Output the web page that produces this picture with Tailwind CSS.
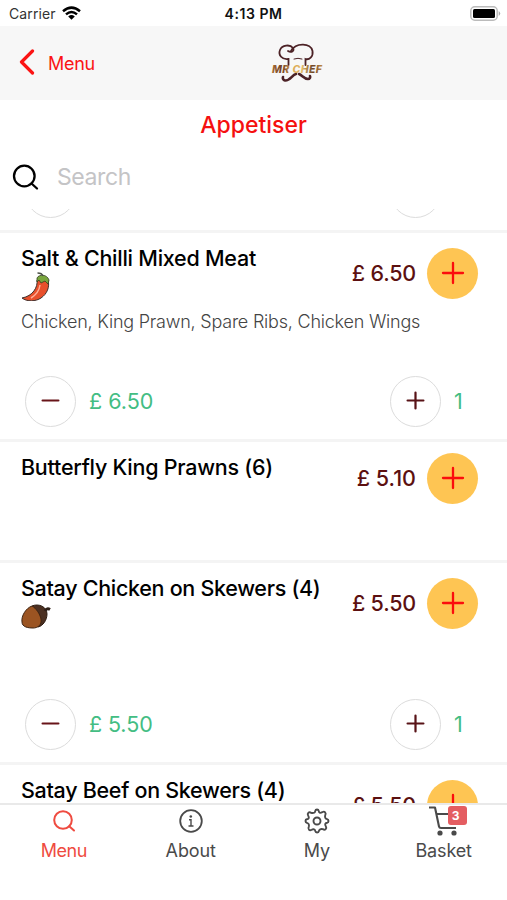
<!DOCTYPE html>
<html lang="en">
<head>
<meta charset="utf-8">
<title>Appetiser</title>
<script src="https://cdn.jsdelivr.net/npm/@tailwindcss/browser@4"></script>
</head>
<body class="bg-white">
<svg class="hidden">
  <symbol id="plus" viewBox="0 0 24 24"><path d="M12 2v20M2 12h20" stroke="currentColor" stroke-linecap="round" fill="none"/></symbol>
  <symbol id="minus" viewBox="0 0 24 24"><path d="M2 12h20" stroke="currentColor" stroke-linecap="round" fill="none"/></symbol>
</svg>
<div class="w-[507px] h-[900px] overflow-hidden flex flex-col bg-white font-['Inter','Liberation_Sans',sans-serif] whitespace-nowrap">
  <div class="h-[26px] shrink-0 grid grid-cols-3 items-center text-[14px] leading-5 text-[#111] pt-[2px]">
    <div class="flex items-center pl-[9px] gap-[6px]">
      <span class="tracking-[0.1px] text-[#333]">Carrier</span>
      <svg class="w-[19px] h-[14px] -mt-[3px]" viewBox="0 0 19 14" fill="none" stroke="#000" stroke-width="2.5"><path d="M1 5.2Q9.5-2 18 5.2M4 8.4Q9.5 3.6 15 8.4"/><path d="M6.2 10.4Q9.5 7.8 12.8 10.4L9.5 13.8Z" fill="#000" stroke="none"/></svg>
    </div>
    <span class="text-center font-semibold tracking-[0.55px]">4:13 PM</span>
    <svg class="justify-self-end mr-[6px] w-[31px] h-[15px] -mt-[2px]" viewBox="0 0 31 15"><rect x=".8" y=".8" width="26.4" height="13.4" rx="4" fill="#fff" stroke="#bbb" stroke-width="1.5"/><rect x="3" y="3" width="22" height="9" rx="1.5"/><path d="M28.7 5q3 2.5 0 5z" fill="#aaa"/></svg>
  </div>
  <div class="h-[74px] shrink-0 bg-[#f7f7f7] flex items-center pl-[19px]">
    <div class="flex items-center text-[#fb1414] w-[252px]">
      <svg class="w-[16px] h-[26px] -mt-[3px]" viewBox="0 0 16 26" fill="none" stroke="currentColor" stroke-width="3.2" stroke-linecap="round" stroke-linejoin="round"><path d="M13.5 2 2.5 13 13.5 24"/></svg>
      <span class="ml-[13px] mt-[2px] text-[18px] leading-6 tracking-[-0.3px]">Menu</span>
    </div>
    <svg class="w-[52px] h-[40px]" viewBox="0 0 52 40" fill="none" stroke="#4c2226" stroke-linecap="round">
      <path stroke-width="1.8" d="M17.5 22V16C11 17 7 12 9 7 11 2 19 1 22 5 24 8 20 10 17 8"/>
      <path stroke-width="1.8" d="M20 8C25-1 40 0 41.5 8 42.5 14 38 17 34.5 16V22"/>
      <path stroke-width="1" d="M23 16q4-1.500 8 0"/>
      <path stroke-width="2.6" d="M25 31C21 32 19 38 14 37.5 12 37 11.5 35 12 34"/>
      <path stroke-width="2.6" d="M28 31C31 32 33 36 37 36 39 36 39.5 34 39 33"/>
      <defs><linearGradient id="gold" x1="0" x2="1"><stop stop-color="#a66c35"/><stop offset=".2" stop-color="#6e3c24"/><stop offset=".4" stop-color="#dba956"/><stop offset=".6" stop-color="#e2b867"/><stop offset=".8" stop-color="#6e4426"/><stop offset="1" stop-color="#c59049"/></linearGradient></defs>
      <text x="1" y="29.5" textLength="50" lengthAdjust="spacing" font-family="Inter" font-weight="800" font-style="italic" font-size="10.5" fill="url(#gold)" stroke="none">MR CHEF</text>
    </svg>
  </div>
  <div class="h-[50px] shrink-0 flex items-center justify-center text-[23px] font-medium text-[#f51010]"><span>Appetiser</span></div>
  <div class="h-[59px] shrink-0 flex items-start pt-[14px] pl-[12px]">
    <svg class="w-[28px] h-[28px]" viewBox="0 0 28 28" fill="none" stroke="#000" stroke-width="2.3" stroke-linecap="round"><circle cx="12.3" cy="12" r="10.3"/><path d="m19.5 19.5 5.5 5"/></svg>
    <span class="ml-[17px] mt-[-1px] text-[23px] leading-[28px] text-[#c4c4c6] tracking-[-0.4px]">Search</span>
  </div>
  <div class="h-[594px] shrink-0 overflow-hidden flex flex-col">
    <div class="h-[24px] shrink-0 border-b-3 border-[#f4f4f4] pl-[25px] pr-[66px] flex items-end justify-between pb-[12px]">
      <div class="size-[51px] shrink-0 rounded-full border-[1.5px] border-[#dcdcdc]"></div>
      <div class="size-[51px] shrink-0 rounded-full border-[1.5px] border-[#dcdcdc]"></div>
    </div>

    <div class="h-[209px] shrink-0 border-b-3 border-[#f4f4f4] flex flex-col justify-between pb-[12px]">
      <div class="flex justify-between pl-[21px] pr-[29px]">
        <div class="pt-[11px] w-[320px]">
          <div class="text-[21.5px] leading-[28px] font-medium text-black tracking-[-0.25px]"><span>Salt &amp; Chilli Mixed Meat</span></div>
          <svg class="w-[30px] h-[29px]" viewBox="0 0 30 29"><path d="M16 8C17 15 12 24 1 26 6 30 15 29.5 20 26 26 22 29 15 27 8 24 5 19 5 16 8Z" fill="#e8502c" stroke="#3d302d"/><path d="M16 6C18 2 26 2 28 8L27 12 24 9 20 11 18 8 16 10Z" fill="#79a63d" stroke="#34401f" stroke-width=".8"/><path d="M22 4Q21 1 16.5 1" fill="none" stroke="#4d5148" stroke-width="1.3"/><path d="M19 13Q18 21 10 26" fill="none" stroke="#ffad96" stroke-width="1.5"/></svg>
          <div class="mt-[9px] text-[18px] leading-[24px] font-light text-[#444] tracking-[-0.22px]"><span>Chicken, King Prawn, Spare Ribs, Chicken Wings</span></div>
        </div>
        <div class="flex items-center h-[51px] mt-[15px]">
          <span class="text-[21.5px] font-medium text-[#5c1010] mr-[11px] tracking-[-0.2px]">£ 6.50</span>
          <div class="size-[51px] rounded-full bg-[#fec553] flex items-center justify-center text-[#fb0d0d]"><svg class="size-[24px] stroke-[2.3] -mt-[2px]"><use href="#plus"/></svg></div>
        </div>
      </div>
      <div class="flex justify-between pl-[25px] -mt-[16px] text-[21.5px] text-[#43bd83]">
        <div class="flex items-center"><div class="size-[51px] rounded-full border-[1.5px] border-[#dcdcdc] flex items-center justify-center text-[#681419]"><svg class="size-[19px] stroke-[2.8] -mt-[2px]"><use href="#minus"/></svg></div><span class="ml-[13px]">£ 6.50</span></div>
        <div class="flex items-center w-[117px]"><div class="size-[51px] rounded-full border-[1.5px] border-[#dcdcdc] flex items-center justify-center text-[#581317]"><svg class="size-[19px] stroke-[2.8] -mt-[2px]"><use href="#plus"/></svg></div><span class="ml-[13px]">1</span></div>
      </div>
    </div>

    <div class="h-[121px] shrink-0 border-b-3 border-[#f4f4f4]">
      <div class="flex justify-between pl-[21px] pr-[29px]">
        <div class="pt-[10.5px] text-[21.5px] leading-[28px] font-medium text-black tracking-[-0.25px]"><span>Butterfly King Prawns (6)</span></div>
        <div class="flex items-center h-[51px] mt-[11px]">
          <span class="text-[21.5px] font-medium text-[#5c1010] mr-[11px]">£ 5.10</span>
          <div class="size-[51px] rounded-full bg-[#fec553] flex items-center justify-center text-[#fb0d0d]"><svg class="size-[24px] stroke-[2.3] -mt-[2px]"><use href="#plus"/></svg></div>
        </div>
      </div>
    </div>

    <div class="h-[202px] shrink-0 border-b-3 border-[#f4f4f4] flex flex-col justify-between pb-[12px]">
      <div class="flex justify-between pl-[21px] pr-[29px]">
        <div class="pt-[10.5px] w-[320px]">
          <div class="text-[21.5px] leading-[28px] font-medium text-black tracking-[-0.3px]"><span>Satay Chicken on Skewers (4)</span></div>
          <svg class="w-[30px] h-[25px] mt-[2px]" viewBox="0 0 30 25"><path d="M11 2C18-1 26 3 26 10 26 16 22 22 17 23Z" fill="#4b3022" stroke="#2d1c12"/><path d="M11 2C5 4 0 12 1 18 1 23 7 24 12 24 17 24 21 21 20 15 19 10 15 4 11 2Z" fill="#9b5422" stroke="#3e2412"/><path d="M24 7Q26 3.5 29 5.5" fill="none" stroke="#2f2018" stroke-width="2.8"/></svg>
        </div>
        <div class="flex items-center h-[51px] mt-[15px]">
          <span class="text-[21.5px] font-medium text-[#5c1010] mr-[11px] tracking-[-0.2px]">£ 5.50</span>
          <div class="size-[51px] rounded-full bg-[#fec553] flex items-center justify-center text-[#fb0d0d]"><svg class="size-[24px] stroke-[2.3] -mt-[2px]"><use href="#plus"/></svg></div>
        </div>
      </div>
      <div class="flex justify-between pl-[25px] text-[21.5px] text-[#43bd83]">
        <div class="flex items-center"><div class="size-[51px] rounded-full border-[1.5px] border-[#dcdcdc] flex items-center justify-center text-[#681419]"><svg class="size-[19px] stroke-[2.8] -mt-[2px]"><use href="#minus"/></svg></div><span class="ml-[13px] tracking-[-0.1px]">£ 5.50</span></div>
        <div class="flex items-center w-[117px]"><div class="size-[51px] rounded-full border-[1.5px] border-[#dcdcdc] flex items-center justify-center text-[#581317]"><svg class="size-[19px] stroke-[2.8] -mt-[2px]"><use href="#plus"/></svg></div><span class="ml-[13px]">1</span></div>
      </div>
    </div>

    <div class="h-[121px] shrink-0">
      <div class="flex justify-between pl-[21px] pr-[29px]">
        <div class="pt-[11px] text-[21.5px] leading-[28px] font-medium text-black tracking-[-0.3px]"><span>Satay Beef on Skewers (4)</span></div>
        <div class="flex items-center h-[51px] mt-[15px]">
          <span class="text-[21.5px] font-medium text-[#5c1010] mr-[11px] tracking-[-0.2px]">£ 5.50</span>
          <div class="size-[51px] rounded-full bg-[#fec553] flex items-center justify-center text-[#fb0d0d]"><svg class="size-[24px] stroke-[2.3] -mt-[2px]"><use href="#plus"/></svg></div>
        </div>
      </div>
    </div>
  </div>
  <div class="flex-1 border-t-2 border-[#e9e9e9] grid grid-cols-4 text-[18px] leading-[24px] text-[#4a4a4a] tracking-[-0.15px]">
    <div class="flex flex-col items-center text-[#ef4b40] pl-[1px]">
      <svg class="w-[24px] h-[24px] mt-[4px]" viewBox="0 0 24 24" fill="none" stroke="currentColor" stroke-width="2" stroke-linecap="round"><circle cx="11" cy="11" r="8.8"/><path d="m17.2 17.2 4.8 4.3"/></svg>
      <span class="mt-[6px] tracking-[-0.4px]">Menu</span>
    </div>
    <div class="flex flex-col items-center pl-[1px]">
      <svg class="w-[24px] h-[24px] mt-[4px]" viewBox="0 0 24 24" fill="none" stroke="currentColor" stroke-width="1.8"><circle cx="12" cy="12" r="10.8"/><path d="M12 10v7M10 10.7h2M9.5 17h5" stroke-width="1.4"/><circle cx="11.8" cy="7.5" r="1.3" fill="currentColor" stroke="none"/></svg>
      <span class="mt-[6px]">About</span>
    </div>
    <div class="flex flex-col items-center">
      <svg class="w-[26px] h-[26px] mt-[3px]" viewBox="0 0 26 26" fill="none" stroke="currentColor" stroke-width="1.9" stroke-linejoin="round"><path d="M10.3 4.7Q11.2 4.3 11.3 2.8Q11.5 1.500 13 1.500T14.7 2.800Q14.800 4.300 15.700 4.700T18.300 4.200Q20 3 21.100 4.300T21.200 7.200Q20.800 8.800 21.300 9.800T23.200 11.200Q24.500 11.500 24.500 13T23.200 14.700Q21.700 14.800 21.300 15.900T21.800 18.300Q22.800 20 21.700 21.100T18.800 21.200Q17.200 20.800 16.200 21.300T14.800 23.200Q14.500 24.500 13 24.500T11.300 23.200Q11.200 21.700 10.100 21.300T7.700 21.800Q6 22.800 4.900 21.700T4.800 18.800Q5.200 17.200 4.700 16.200T2.800 14.800Q1.500 14.500 1.500 13T2.800 11.300Q4.300 11.200 4.700 10.100T4.200 7.700Q3.200 6 4.300 4.900T7.200 4.800Q8.800 5.200 10.300 4.700Z"/><circle cx="13" cy="13" r="3.5"/></svg>
      <span class="mt-[5px]">My</span>
    </div>
    <div class="flex flex-col items-center">
      <div class="relative w-[30px] h-[31px]">
        <svg class="w-[30px] h-[31px]" viewBox="0 0 30 31" fill="none" stroke="currentColor" stroke-width="2.1" stroke-linejoin="round"><path d="M0 2.5h6L10 21.500Q10.300 23 12 23H27M7.500 9H27l-2 9"/><circle cx="11" cy="28" r="2.6" fill="currentColor" stroke="none"/><circle cx="25" cy="28" r="2.6" fill="currentColor" stroke="none"/></svg>
        <span class="absolute left-[19px] top-[1px] w-[19px] h-[19px] rounded-[3px] bg-[#e45d61] text-white text-[12px] leading-[19px] font-bold text-center pr-[3px]">3</span>
      </div>
      <span class="mt-[3px]">Basket</span>
    </div>
  </div>
</div>
</body>
</html>
